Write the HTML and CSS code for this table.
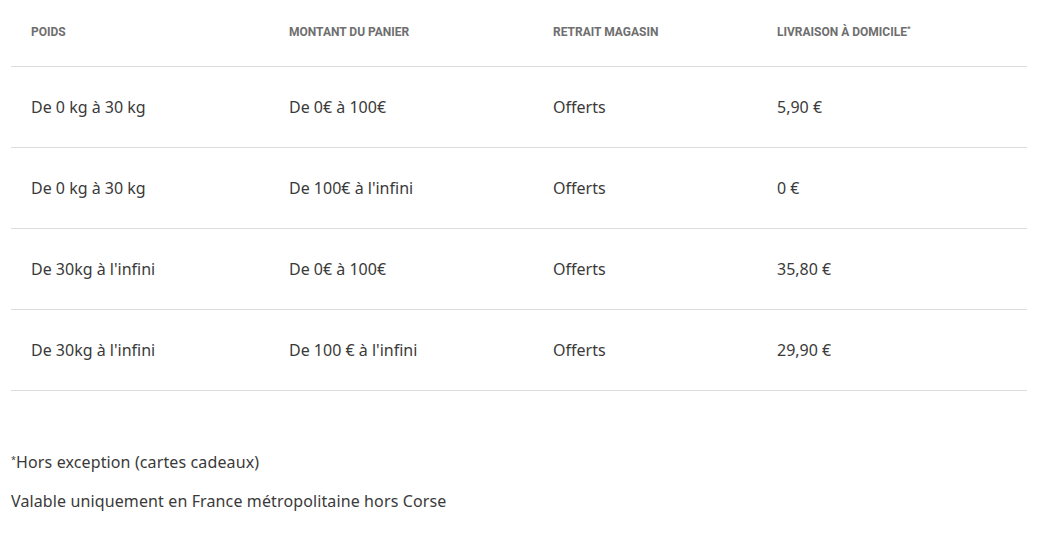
FILE: index.html
```html
<!DOCTYPE html>
<html lang="fr">
<head>
<meta charset="utf-8">
<link rel="stylesheet" href="styles.css">
</head>
<body>
<div class="page">
  <table class="rates">
    <colgroup>
      <col class="c1"><col class="c2"><col class="c3"><col class="c4">
    </colgroup>
    <thead>
      <tr>
        <th>Poids</th>
        <th>Montant du panier</th>
        <th>Retrait magasin</th>
        <th>Livraison à domicile<sup>*</sup></th>
      </tr>
    </thead>
    <tbody>
      <tr><td>De 0 kg à 30 kg</td><td>De 0€ à 100€</td><td>Offerts</td><td>5,90 €</td></tr>
      <tr><td>De 0 kg à 30 kg</td><td>De 100€ à l'infini</td><td>Offerts</td><td>0 €</td></tr>
      <tr><td>De 30kg à l'infini</td><td>De 0€ à 100€</td><td>Offerts</td><td>35,80 €</td></tr>
      <tr><td>De 30kg à l'infini</td><td>De 100 € à l'infini</td><td>Offerts</td><td>29,90 €</td></tr>
    </tbody>
  </table>
  <div class="notes">
    <p><sup>*</sup>Hors exception (cartes cadeaux)</p>
    <p>Valable uniquement en France métropolitaine hors Corse</p>
  </div>
</div>
</body>
</html>
```
FILE: styles.css
```css
html, body {
  margin: 0;
  padding: 0;
  background: #ffffff;
}
body {
  font-family: "Noto Sans", "Roboto", sans-serif;
  color: #333333;
}
.page {
  padding: 0 37px 0 11px;
}
.rates {
  width: 1016px;
  border-collapse: collapse;
  table-layout: fixed;
}
.c1 { width: 258px; }
.c2 { width: 264px; }
.c3 { width: 224px; }
.c4 { width: 270px; }
.rates th {
  height: 66px;
  padding: 0 0 2px 20px;
  box-sizing: border-box;
  text-align: left;
  font-family: "Roboto", sans-serif;
  font-size: 12px;
  font-weight: 700;
  text-transform: uppercase;
  color: #6e6e6e;
  border-bottom: 1px solid #dddddd;
  vertical-align: middle;
}
.rates th sup {
  font-size: 8px;
  vertical-align: top;
  line-height: 1;
}
.rates td {
  height: 81px;
  padding: 0 0 0 20px;
  box-sizing: border-box;
  font-size: 16px;
  color: #3a3a3a;
  border-bottom: 1px solid #dddddd;
  vertical-align: middle;
}
.notes {
  padding-top: 60px;
}
.notes p {
  margin: 0 0 17px 0;
  font-size: 16px;
  line-height: 22px;
  letter-spacing: 0.12px;
  color: #3a3a3a;
}
.notes sup {
  font-size: 9px;
  vertical-align: 5px;
  line-height: 1;
}
```
